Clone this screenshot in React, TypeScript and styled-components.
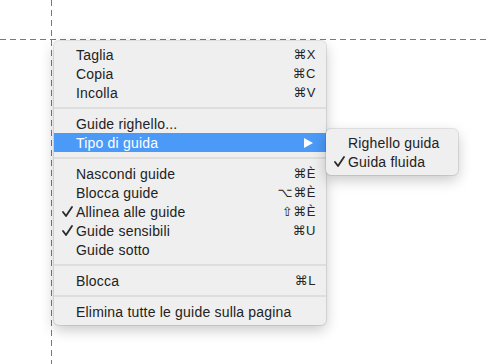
import React from 'react'
import styled, { createGlobalStyle } from 'styled-components'

const GlobalStyle = createGlobalStyle`
  html, body {
    margin: 0;
    padding: 0;
    background: #ffffff;
    overflow: hidden;
  }
`

const Canvas = styled.div`
  position: relative;
  width: 490px;
  height: 364px;
  background: #ffffff;
  font-family: 'Liberation Sans', 'DejaVu Sans', sans-serif;
  -webkit-font-smoothing: antialiased;
`

// ruler guides across the artboard
const GuideH = styled.div`
  position: absolute;
  left: 0;
  right: 0;
  top: 39px;
  height: 1px;
  background-image: linear-gradient(to right, #3f80ea 6px, transparent 6px);
  background-size: 10px 1px;
  background-repeat: repeat-x;
`

const GuideV = styled.div`
  position: absolute;
  top: 0;
  bottom: 0;
  left: 51px;
  width: 1px;
  background-image: linear-gradient(to bottom, #3f80ea 6px, transparent 6px);
  background-size: 1px 10px;
  background-repeat: repeat-y;
`

const Menu = styled.div<{ $left: number; $top: number; $width: number }>`
  position: absolute;
  left: ${(p) => p.$left}px;
  top: ${(p) => p.$top}px;
  width: ${(p) => p.$width}px;
  box-sizing: border-box;
  display: flex;
  flex-direction: column;
  padding: 4px 0;
  background: #efefef;
  border-radius: 5px;
  box-shadow: 0 0 0 1px rgba(0, 0, 0, 0.09), 0 5px 14px rgba(0, 0, 0, 0.22);
  color: #222222;
  font-size: 14px;
  letter-spacing: 0.2px;
`

const Row = styled.div<{ $active?: boolean }>`
  display: grid;
  grid-template-columns: 22px 1fr auto;
  align-items: center;
  height: 19px;
  padding-right: 10px;
  background: ${(p) => (p.$active ? '#4b9af8' : 'transparent')};
  color: ${(p) => (p.$active ? '#ffffff' : 'inherit')};
`

const Gutter = styled.span`
  display: flex;
  align-items: center;
  justify-content: flex-end;
  padding-right: 3px;
`

const Label = styled.span`
  white-space: nowrap;
`

const Shortcut = styled.span`
  font-family: 'Liberation Sans', 'DejaVu Sans', sans-serif;
  font-size: 13px;
  letter-spacing: 0.6px;
  color: #262626;
  white-space: nowrap;
`

const Separator = styled.div`
  height: 2px;
  margin: 5px 0;
  background: #dedede;
`

const Arrow = styled.svg`
  width: 9px;
  height: 10px;
  margin-right: 3px;
`

const CheckMark = () => (
  <svg width="11" height="11" viewBox="0 0 11 11">
    <polyline
      points="1,6 4,10 10,1"
      fill="none"
      stroke="#2a2a2a"
      strokeWidth="1.8"
      strokeLinecap="round"
      strokeLinejoin="round"
    />
  </svg>
)

type Item =
  | { kind: 'sep' }
  | { kind: 'item'; label: string; key?: string; checked?: boolean; active?: boolean; sub?: boolean }

const mainItems: Item[] = [
  { kind: 'item', label: 'Taglia', key: '⌘X' },
  { kind: 'item', label: 'Copia', key: '⌘C' },
  { kind: 'item', label: 'Incolla', key: '⌘V' },
  { kind: 'sep' },
  { kind: 'item', label: 'Guide righello...' },
  { kind: 'item', label: 'Tipo di guida', active: true, sub: true },
  { kind: 'sep' },
  { kind: 'item', label: 'Nascondi guide', key: '⌘È' },
  { kind: 'item', label: 'Blocca guide', key: '⌥⌘È' },
  { kind: 'item', label: 'Allinea alle guide', key: '⇧⌘È', checked: true },
  { kind: 'item', label: 'Guide sensibili', key: '⌘U', checked: true },
  { kind: 'item', label: 'Guide sotto' },
  { kind: 'sep' },
  { kind: 'item', label: 'Blocca', key: '⌘L' },
  { kind: 'sep' },
  { kind: 'item', label: 'Elimina tutte le guide sulla pagina' },
]

const subItems: Item[] = [
  { kind: 'item', label: 'Righello guida' },
  { kind: 'item', label: 'Guida fluida', checked: true },
]

const renderItems = (items: Item[]) =>
  items.map((it, i) =>
    it.kind === 'sep' ? (
      <Separator key={i} />
    ) : (
      <Row key={i} $active={it.active}>
        <Gutter>{it.checked && <CheckMark />}</Gutter>
        <Label>{it.label}</Label>
        {it.key && <Shortcut>{it.key}</Shortcut>}
        {it.sub && (
          <Arrow viewBox="0 0 9 10">
            <polygon points="0,0 9,5 0,10" fill="#ffffff" />
          </Arrow>
        )}
      </Row>
    )
  )

export default function App() {
  return (
    <>
      <GlobalStyle />
      <Canvas>
        <GuideH />
        <GuideV />
        <Menu $left={54} $top={41} $width={272}>
          {renderItems(mainItems)}
        </Menu>
        <Menu $left={326} $top={129} $width={132}>
          {renderItems(subItems)}
        </Menu>
      </Canvas>
    </>
  )
}
